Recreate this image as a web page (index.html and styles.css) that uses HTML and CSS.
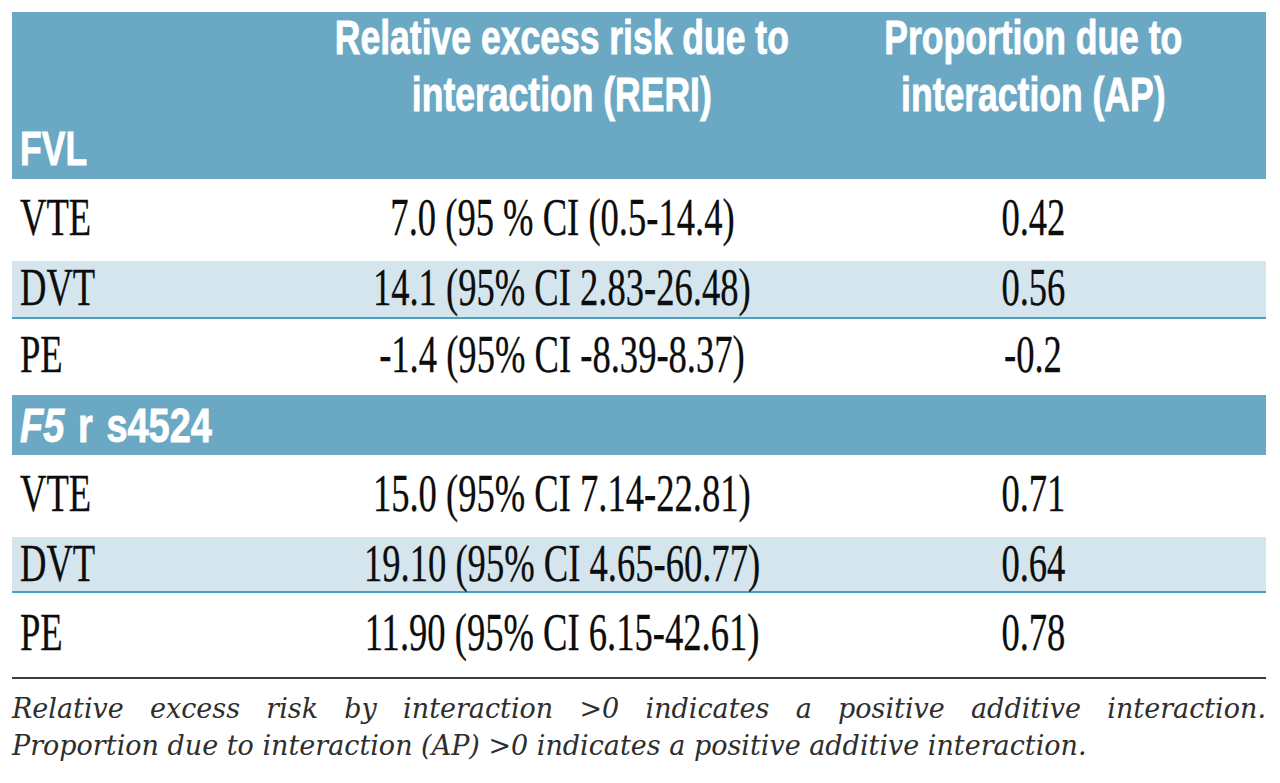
FILE: index.html
```html
<!DOCTYPE html>
<html lang="en">
<head>
<meta charset="utf-8">
<title>RERI and AP table</title>
<link rel="stylesheet" href="styles.css">
</head>
<body>
<div class="page">
  <div class="table">
    <div class="row head">
      <div class="c1 head-label"><span class="hx left">FVL</span></div>
      <div class="c2 head-col"><span class="hx top">Relative excess risk due to<br>interaction (RERI)</span></div>
      <div class="c3 head-col"><span class="hx top">Proportion due to<br>interaction (AP)</span></div>
    </div>

    <div class="row body r-tall">
      <div class="c1"><span class="bx left">VTE</span></div>
      <div class="c2"><span class="bx">7.0 (95 % CI (0.5-14.4)</span></div>
      <div class="c3"><span class="bx">0.42</span></div>
    </div>
    <div class="row body shade r-short">
      <div class="c1"><span class="bx left">DVT</span></div>
      <div class="c2"><span class="bx">14.1 (95% CI 2.83-26.48)</span></div>
      <div class="c3"><span class="bx">0.56</span></div>
    </div>
    <div class="row body r-mid">
      <div class="c1"><span class="bx left">PE</span></div>
      <div class="c2"><span class="bx">-1.4 (95% CI -8.39-8.37)</span></div>
      <div class="c3"><span class="bx">-0.2</span></div>
    </div>

    <div class="row section">
      <div class="c1"><span class="hx left sec"><i>F5</i> r s4524</span></div>
    </div>

    <div class="row body r-tall">
      <div class="c1"><span class="bx left">VTE</span></div>
      <div class="c2"><span class="bx">15.0 (95% CI 7.14-22.81)</span></div>
      <div class="c3"><span class="bx">0.71</span></div>
    </div>
    <div class="row body shade r-short2">
      <div class="c1"><span class="bx left">DVT</span></div>
      <div class="c2"><span class="bx">19.10 (95% CI 4.65-60.77)</span></div>
      <div class="c3"><span class="bx">0.64</span></div>
    </div>
    <div class="row body r-last">
      <div class="c1"><span class="bx left">PE</span></div>
      <div class="c2"><span class="bx">11.90 (95% CI 6.15-42.61)</span></div>
      <div class="c3"><span class="bx">0.78</span></div>
    </div>
  </div>

  <div class="note">
    <p class="note-line justify">Relative excess risk by interaction &gt;0 indicates a positive additive interaction.</p>
    <p class="note-line">Proportion due to interaction (AP) &gt;0 indicates a positive additive interaction.</p>
  </div>
</div>
</body>
</html>
```

FILE: styles.css
```css
html, body {
  margin: 0;
  padding: 0;
  background: #ffffff;
}

.page {
  width: 1254px;
  padding: 12px 0 0 12px;
}

.table {
  display: flex;
  flex-direction: column;
  border-bottom: 2px solid #3c3c3c;
}

.row {
  display: grid;
  grid-template-columns: 312px 476px 466px;
  box-sizing: border-box;
}

.row > div {
  min-width: 0;
  display: flex;
  align-items: center;
  justify-content: center;
  overflow: visible;
}

.row > .c1 {
  justify-content: flex-start;
  padding-left: 8px;
}

/* header */
.head {
  height: 167px;
  background: #6aa8c4;
}

.head .head-col {
  align-items: flex-start;
  text-align: center;
}

.head .head-label {
  align-items: flex-end;
  padding-bottom: 2px;
}

.hx {
  display: inline-block;
  font-family: "Liberation Sans", Arial, sans-serif;
  font-weight: bold;
  font-size: 48px;
  line-height: 57px;
  color: #ffffff;
  white-space: nowrap;
  -webkit-text-stroke: 0.9px #ffffff;
  transform: scaleX(0.74);
  transform-origin: center center;
}

.hx.top {
  margin-top: -3px;
}

.hx.left {
  transform-origin: left center;
}

.hx.sec {
  word-spacing: 4px;
  transform: scaleX(0.79);
}

.hx i {
  font-style: italic;
}

.section {
  height: 60px;
  background: #6aa8c4;
}

.section .c1 {
  grid-column: 1 / 4;
}

/* body rows */
.body {
  padding-bottom: 7px;
}

.r-tall { height: 82px; }
.r-short { height: 58px; }
.r-mid { height: 76px; }
.r-short2 { height: 56px; }
.r-last { height: 84px; }

.shade {
  background: #d5e5ee;
  border-bottom: 2px solid #4a9fc2;
  padding-bottom: 5px;
}

.bx {
  display: inline-block;
  font-family: "Liberation Serif", "Times New Roman", serif;
  font-size: 53px;
  line-height: 52px;
  color: #0d0d0d;
  white-space: nowrap;
  -webkit-text-stroke: 0.3px #0d0d0d;
  transform: scaleX(0.69);
  transform-origin: center center;
}

.bx.left {
  transform-origin: left center;
}

/* footnote */
.note {
  padding-top: 11px;
}

.note-line {
  margin: 0;
  font-family: "DejaVu Serif", "Liberation Serif", serif;
  font-style: italic;
  font-size: 27px;
  line-height: 37px;
  color: #2e2e2e;
}

.note-line.justify {
  text-align: justify;
  text-align-last: justify;
}
```
